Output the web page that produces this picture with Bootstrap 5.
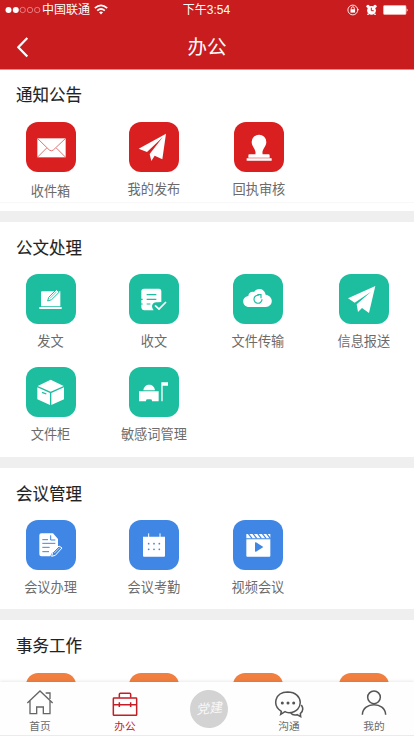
<!DOCTYPE html>
<html lang="zh-CN">
<head>
<meta charset="utf-8">
<meta name="viewport" content="width=device-width, initial-scale=1">
<title>办公</title>
<link href="https://cdn.jsdelivr.net/npm/bootstrap@5.3.0/dist/css/bootstrap.min.css" rel="stylesheet">
<style>
html,body{height:100%;overflow:hidden}
body{font-family:"Liberation Sans","Noto Sans CJK SC",sans-serif;background:#efefef;color:#6b6b6b}
.app{width:414px;height:736px;overflow:hidden}
.top{background:#c91c1e;height:70px;border-bottom:1px solid #df8d88;color:#fff}
.status{height:19px;font-size:12px;line-height:19px;padding-left:5px;padding-right:6px}
.status span{padding-top:2px}
.status svg,.titlebar svg,.tile svg,.tab svg{display:block}
.third{flex:1 1 0}
.alarm{margin:0 6px 0 7px}
.titlebar{height:50px;padding:0 17px}
.titlebar svg{margin-top:5px}
.titlebar h1{font-size:19.5px;line-height:24px;padding-top:6px;font-weight:400}
.titlebar i{width:12px}
.scroller{height:612px;overflow:hidden}
.panel{background:#fff;margin-bottom:11px}
.panel h2{font-size:16.5px;line-height:52px;height:52px;color:#222;padding-left:16px;font-weight:400;-webkit-text-stroke:.12px #222}
.tiles{display:grid;grid-template-columns:101px 105.8px 102.2px 105.4px}
.cell{height:93px}
.cell:nth-child(4n){padding-left:4.4px}
.tile{width:50px;height:50px;border-radius:12px;flex:none}
.red{background:#da1f21}.green{background:#1dbd9f}.blue{background:#4086e4}.orange{background:#f18040}
.cell span{font-size:13.2px;line-height:20px;margin-top:8px;white-space:nowrap}
.notice{height:141px}
.panel.notice h2{height:51.5px;line-height:50px}
.notice .tiles{height:81px;border-bottom:1px solid #f8f8f8}
.notice .cell:first-child span{margin-top:10px}
.notice .cell:nth-child(3){padding-left:2px}
.docs{height:235px}.meet{height:141px}
.affairs h2{height:53px}
.tabs{height:54px;background:#fefefe;box-shadow:0 -1px 3px rgba(0,0,0,.09);border-bottom:1px solid #ebebeb;display:grid;grid-template-columns:80px 90px 78px 82px 84px;position:relative}
.tab{font-size:10.7px;line-height:16px;padding-top:6px}
.tab svg{width:30px;height:30px;flex:none}
.tab:last-child{padding-left:4px}
.tab.on{color:#c41d25}
.seal{width:38px;height:38px;border-radius:50%;background:#d3d3d3;color:#f8f8f8;font-size:13px;font-style:italic;margin-top:2px;line-height:38px;transform:rotate(-6deg)}
</style>
<script src="https://cdn.jsdelivr.net/npm/bootstrap@5.3.0/dist/js/bootstrap.bundle.min.js"></script>
</head>
<body>
<div class="app d-flex flex-column">
<header class="top flex-shrink-0">
  <div class="status d-flex align-items-center">
    <div class="third d-flex align-items-center">
      <svg width="37" height="8" viewBox="0 0 37 8"><g fill="#fff"><circle cx="3.5" cy="4" r="3"/><circle cx="10.8" cy="4" r="3"/></g><g fill="none" stroke="#f0a0a0" stroke-width=".7"><circle cx="17.7" cy="4" r="2.7"/><circle cx="25" cy="4" r="2.7"/><circle cx="32.2" cy="4" r="2.7"/></g></svg>
      <span>中国联通</span>
      <svg class="ms-1" width="14" height="11" viewBox="0 0 14 11" fill="none" stroke="#fff" stroke-width="1.7"><path d="M.8 4.2Q7-1.4 13.2 4.2M3.2 6.7Q7 3.3 10.8 6.7"/><path d="M5 8.3Q7 6.8 9 8.3L7 10.5Z" fill="#fff" stroke="none"/></svg>
    </div>
    <span>下午3:54</span>
    <div class="third d-flex align-items-center justify-content-end">
      <svg width="12" height="12" viewBox="0 0 12 12"><circle cx="5.8" cy="6" r="4.9" fill="none" stroke="#fff" stroke-width=".9"/><path d="M10 5l1.9 0-1 2z" fill="#fff"/><rect x="3.5" y="5.2" width="4.6" height="3.4" fill="#fff"/><path d="M4.3 5.4V4.3a1.5 1.5 0 013 0v1.1" fill="none" stroke="#fff" stroke-width=".9"/></svg>
      <svg class="alarm" width="11" height="12" viewBox="0 0 11 12"><g fill="#fff"><circle cx="5.5" cy="6.4" r="4.4"/><circle cx="2" cy="2.3" r="1.6"/><circle cx="9" cy="2.3" r="1.6"/><path d="M2 9l-1 2h2zM9 9l1 2H8z"/></g><path d="M5.3 3.7v3h2.4" fill="none" stroke="#c91c1e"/></svg>
      <svg width="25" height="10" viewBox="0 0 25 10"><rect x=".5" y=".5" width="22.5" height="9" rx="1" fill="#fff" stroke="#f5b9b9" stroke-width=".7"/><path d="M23.7 3.2q1.8 1.8 0 3.6z" fill="#fff"/></svg>
    </div>
  </div>
  <div class="titlebar d-flex align-items-center">
    <svg width="12" height="22" viewBox="0 0 12 22" fill="none" stroke="#fff" stroke-width="2.3"><path d="M10.3 2L1.3 11.3 10.3 20.5"/></svg>
    <h1 class="mb-0 flex-fill text-center">办公</h1><i></i>
  </div>
</header>

<main class="scroller flex-shrink-0">
<section class="panel notice">
  <h2 class="mb-0">通知公告</h2>
  <div class="tiles">
    <div class="cell d-flex flex-column align-items-center"><div class="tile red"><svg viewBox="0 0 150 150"><path fill="#fff" d="M34 49h85v57H34z"/><path d="M34 49l36 35q6 5 12 0l37-35M34 106l28-28M119 106L91 78" fill="none" stroke="#d54b4b" stroke-width="2.3"/></svg></div><span>收件箱</span></div>
    <div class="cell d-flex flex-column align-items-center"><div class="tile red"><svg viewBox="0 0 150 150" fill="#fff"><path d="M111 35L29 80l25 10 47-44-39 50 5 21 10-16 23 11z"/></svg></div><span>我的发布</span></div>
    <div class="cell d-flex flex-column align-items-center"><div class="tile red"><svg viewBox="0 0 150 150" fill="#fff"><path d="M64 97c4-14-11-23-11-37a22 22 0 0144 0c0 14-15 23-11 37h18q3 0 3 4v6H43v-6q0-4 3-4zM38 109h75v7H38z"/></svg></div><span>回执审核</span></div>
  </div>
</section>

<section class="panel docs">
  <h2 class="mb-0">公文处理</h2>
  <div class="tiles">
    <div class="cell d-flex flex-column align-items-center"><div class="tile green"><svg viewBox="0 0 150 150"><path fill="#fff" d="M48 52h55v45H45V55q0-3 3-3zM40 99h67v6H40z"/><path d="M65 81l3-11 23-23 9 7-23 23z" fill="#fff" stroke="#1dbd9f" stroke-width="3"/><path d="M71 74l21-21" stroke="#1dbd9f" stroke-width="2"/></svg></div><span>发文</span></div>
    <div class="cell d-flex flex-column align-items-center"><div class="tile green"><svg viewBox="0 0 150 150"><path fill="#fff" d="M45 44h45q7 0 7 8v32l-9 1q-17-3-19 11 0 8 5 13H46q-8 0-9-9V52q0-8 8-8z"/><path d="M53 62h29M53 76h29M53 90h11M34 76h7M34 90h7" stroke="#1dbd9f" stroke-width="3.5"/><path d="M78 94l12 11 21-21" fill="none" stroke="#fff" stroke-width="5"/></svg></div><span>收文</span></div>
    <div class="cell d-flex flex-column align-items-center"><div class="tile green"><svg viewBox="0 0 150 150"><path fill="#fff" d="M49 99c-24 0-24-31-3-33 0-9 9-15 17-12 8-14 31-13 35 8 26 4 23 37 0 37z"/><path d="M77 64a12 12 0 1010 12" fill="none" stroke="#1dbd9f" stroke-width="3.5"/><path d="M73 62h11v11" fill="none" stroke="#1dbd9f" stroke-width="3.5"/></svg></div><span>文件传输</span></div>
    <div class="cell d-flex flex-column align-items-center"><div class="tile green"><svg viewBox="0 0 150 150" fill="#fff"><path d="M109 36L27 73l20 13 49-33-43 38 4 23 12-12 21 15z"/></svg></div><span>信息报送</span></div>
    <div class="cell d-flex flex-column align-items-center"><div class="tile green"><svg viewBox="0 0 150 150"><path fill="#fff" d="M74 38l39 19-39 17-39-17zM34 61l38 17v36L34 97zM114 61L76 78v36l38-17z"/><path d="M48 76l13 5" stroke="#1dbd9f" stroke-width="4"/></svg></div><span>文件柜</span></div>
    <div class="cell d-flex flex-column align-items-center"><div class="tile green"><svg viewBox="0 0 150 150" fill="#fff"><path d="M30 73h59v30H69v-2q0-4-5-4h-8q-5 0-5 4v2H30zM43 70c3-22 32-22 35 0zM97 46h20v10h-16v47h-4z"/></svg></div><span>敏感词管理</span></div>
  </div>
</section>

<section class="panel meet">
  <h2 class="mb-0">会议管理</h2>
  <div class="tiles">
    <div class="cell d-flex flex-column align-items-center"><div class="tile blue"><svg viewBox="0 0 150 150"><path fill="#fff" d="M46 40h35l15 17v26l-20 18-3 8H46q-6 0-6-6V46q0-6 6-6z"/><path d="M49 59h17M74 46v14h14M49 70h39M49 82h22M49 95h20" fill="none" stroke="#4086e4" stroke-width="3"/><path d="M77 109l3-12 19-19 9 6-20 22z" fill="#4086e4" stroke="#fff" stroke-width="3"/><path d="M85 99l16-16" stroke="#fff" stroke-width="2"/></svg></div><span>会议办理</span></div>
    <div class="cell d-flex flex-column align-items-center"><div class="tile blue"><svg viewBox="0 0 150 150"><path fill="#fff" d="M42 50h66v57q0 3-3 3H45q-3 0-3-3z"/><path d="M59 40v12M93 40v12" stroke="#fff" stroke-width="3"/><g fill="#4086e4"><circle cx="59" cy="71" r="2.6"/><circle cx="75" cy="71" r="2.6"/><circle cx="91" cy="71" r="2.6"/><circle cx="59" cy="88" r="2.6"/><circle cx="75" cy="88" r="2.6"/><circle cx="91" cy="88" r="2.6"/></g></svg></div><span>会议考勤</span></div>
    <div class="cell d-flex flex-column align-items-center"><div class="tile blue"><svg viewBox="0 0 150 150"><path fill="#fff" d="M40 42h72v13H40zM40 58h72v49q0 3-3 3H43q-3 0-3-3z"/><path d="M46 41l11 14M60 41l11 14M74 41l11 14M88 41l11 14M101 41l11 14" stroke="#4086e4" stroke-width="3.5"/><path d="M66 69q0-3 3-2l22 14-22 14q-3 1-3-2z" fill="#4086e4"/></svg></div><span>视频会议</span></div>
  </div>
</section>

<section class="panel affairs">
  <h2 class="mb-0">事务工作</h2>
  <div class="tiles">
    <div class="cell d-flex flex-column align-items-center"><div class="tile orange"></div></div>
    <div class="cell d-flex flex-column align-items-center"><div class="tile orange"></div></div>
    <div class="cell d-flex flex-column align-items-center"><div class="tile orange"></div></div>
    <div class="cell d-flex flex-column align-items-center"><div class="tile orange"></div></div>
  </div>
</section>
</main>

<nav class="tabs flex-shrink-0">
  <div class="tab d-flex flex-column align-items-center"><svg viewBox="0 0 90 90" fill="none" stroke="#666" stroke-width="4"><path d="M7 45L45 9l38 36M15 39v38h20V57h20v20h20V39M62 15h13v18"/></svg><span>首页</span></div>
  <div class="tab on d-flex flex-column align-items-center"><svg viewBox="0 0 90 90" fill="none" stroke="#c41d25" stroke-width="4.5"><rect x="10" y="30" width="70" height="52" rx="2"/><path d="M28 29V19q0-3 3-3h28q3 0 3 3v10M10 50h70M28 43v14M62 43v14"/></svg><span>办公</span></div>
  <div class="tab d-flex flex-column align-items-center"><div class="seal text-center">党建</div></div>
  <div class="tab d-flex flex-column align-items-center"><svg viewBox="0 0 90 90" fill="none" stroke="#555" stroke-width="4.5"><path d="M22 70C-6 52 2 13 41 12c48 0 51 60 4 62q-8 0-12-3l-13 8z"/><path d="M82 51c8 12 4 20-3 26l1 9-11-6q-12 3-19-5"/><g fill="#555" stroke="none"><circle cx="25" cy="45" r="4.5"/><circle cx="42" cy="45" r="4.5"/><circle cx="59" cy="45" r="4.5"/></g></svg><span>沟通</span></div>
  <div class="tab d-flex flex-column align-items-center"><svg viewBox="0 0 90 90" fill="none" stroke="#555" stroke-width="4.5"><circle cx="45" cy="28" r="19"/><path d="M10 80c2-40 68-40 70 0"/></svg><span>我的</span></div>
</nav>
</div>
</body>
</html>
